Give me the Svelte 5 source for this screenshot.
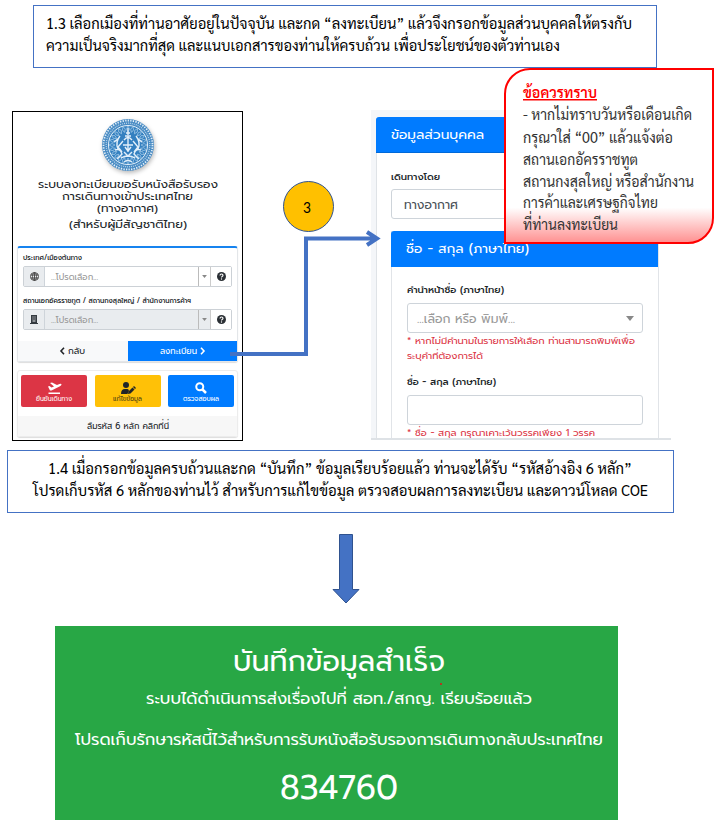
<script>
  const words = [];
  for (let i = 0; i < 24; i++) words.push(i * 15);
</script>

{#snippet line(s, w, h, size, base, cls = '', x = 0)}
  <svg class="line {cls}" width={w + x} height={h}>
    <text {x} y={base} font-size={size} textLength={w} lengthAdjust="spacingAndGlyphs">{s}</text>
  </svg>
{/snippet}

{#snippet help()}
  <svg width="9" height="9" viewBox="0 0 18 18"><circle cx="9" cy="9" r="9" fill="#2b3035" /><path d="M6 7q0-3 3-3t3 2.6q0 1.400-1.600 2.200T9 11" fill="none" stroke="#fff" stroke-width="2.200" /><circle cx="9" cy="14" r="1.300" fill="#fff" /></svg>
{/snippet}

{#snippet caret()}
  <svg width="5" height="3" viewBox="0 0 8 5"><path d="M0 0h8L4 5z" fill="#888" /></svg>
{/snippet}

<main>
  <section class="note first">
    {@render line('1.3 เลือกเมืองที่ท่านอาศัยอยู่ในปัจจุบัน และกด “ลงทะเบียน” แล้วจึงกรอกข้อมูลส่วนบุคคลให้ตรงกับ', 586, 22, 15, 17, 'doc')}
    {@render line('ความเป็นจริงมากที่สุด และแนบเอกสารของท่านให้ครบถ้วน เพื่อประโยชน์ของตัวท่านเอง', 514, 22, 15, 17, 'doc')}
  </section>

  <div class="screens">
    <section class="phone">
      <svg class="seal" width="54" height="54" viewBox="-27 -27 54 54">
        <circle r="26" fill="#4a8cc4" />
        <circle r="24.500" fill="none" stroke="#e4f0f9" stroke-width="1.800" stroke-dasharray="1.300 1.300" />
        <circle r="21.800" fill="none" stroke="#b9d5ea" stroke-width="1.200" stroke-dasharray="1 1" />
        <circle r="19.500" fill="#3480c0" stroke="#e6f2fa" stroke-width="1" />
        {#each words as a}
          <path transform="rotate({a})" d="M0-19l1.500 3L0-13l-1.500-3z" fill="none" stroke="#a6cce8" stroke-width=".7" />
        {/each}
        <g fill="none" stroke="#e2effa" stroke-width="1.400">
          <path d="M0-17v7M-3-9h6M-2-12h4M-4-5q4-5 8 0M0-9v16M-5 0h10M-8-9q-5 6-2 13M8-9q5 6 2 13M-5-4l-5 6 4 5M5-4l5 6-4 5M-13 5q5-2 7 4l-5 5M13 5q-5-2-7 4l5 5M-4 7l4 4 4-4M-7 13q7-4 14 0M-4 17q4-3 8 0M-14-3l5-4M14-3l-5-4M-3 2l3 4 3-4" />
        </g>
      </svg>
      <div class="title">
        {@render line('ระบบลงทะเบียนขอรับหนังสือรับรอง', 180, 12, 10, 10)}
        {@render line('การเดินทางเข้าประเทศไทย', 131, 12, 10, 10)}
        {@render line('(ทางอากาศ)', 61, 12, 10, 10)}
        {@render line('(สำหรับผู้มีสัญชาติไทย)', 118, 16, 10.500, 14)}
      </div>
      <div class="search">
        <div class="fields">
          {@render line('ประเทศ/เมืองต้นทาง', 59, 17, 7, 11, 'strong')}
          <div class="combo">
            <span class="lead"><svg width="9" height="9" viewBox="0 0 18 18" fill="none" stroke="#444" stroke-width="1.800"><circle cx="9" cy="9" r="8" /><ellipse cx="9" cy="9" rx="4" ry="8" /><path d="M1 6h16M1 12h16M9 1v16" /></svg></span>
            <span class="value">{@render line('...โปรดเลือก...', 47, 20, 8.5, 13, 'muted')}</span>
            <span class="drop">{@render caret()}</span><span class="ask">{@render help()}</span>
          </div>
          <div class="second">{@render line('สถานเอกอัครราชทูต / สถานกงสุลใหญ่ / สำนักงานการค้าฯ', 168, 22, 7, 16, 'strong')}</div>
          <div class="combo off">
            <span class="lead"><svg width="8" height="9" viewBox="0 0 16 18"><path fill="#343a40" d="M2 0h12v16h2v2H0v-2h2z" /><path stroke="#e9ecef" stroke-width="2" d="M5 4h2M9 4h2M5 8h2M9 8h2M5 12h6" /></svg></span>
            <span class="value">{@render line('...โปรดเลือก...', 47, 20, 8.5, 13, 'muted')}</span>
            <span class="drop">{@render caret()}</span><span class="ask">{@render help()}</span>
          </div>
        </div>
        <div class="actions">
          <button class="back"><svg width="5" height="8" viewBox="0 0 5 8"><path d="M4 .8L1 4l3 3.200" fill="none" stroke="currentColor" stroke-width="1.600" /></svg>{@render line('กลับ', 17, 20, 8, 13)}</button>
          <button class="go">{@render line('ลงทะเบียน', 37, 20, 8, 13)}<svg width="5" height="8" viewBox="0 0 5 8"><path d="M1 .8L4 4 1 7.200" fill="none" stroke="currentColor" stroke-width="1.600" /></svg></button>
        </div>
      </div>
      <div class="tools">
        <div class="tiles">
          <button class="tile red"><svg width="14" height="12" viewBox="0 0 28 24"><path fill="#fff" d="M3 21h23v3H3zM2 9l3-1 4 3 5-2-8-7 4-1 10 5 5-2q4-1 4 1 0 2-4 4L9 17H6z" /></svg>{@render line('ยืนยันเดินทาง', 36, 9, 6.500, 7)}</button>
          <button class="tile yellow"><svg width="14" height="12" viewBox="0 0 28 24"><circle cx="10" cy="6" r="6" fill="#212529" /><path fill="#212529" d="M0 24q0-10 8-10h5l3 2-3 8zM15 19l8-8 4 4-8 8-5 1zM24 10l2-2 4 4-2 2z" /></svg>{@render line('แก้ไขข้อมูล', 29, 9, 6.500, 7)}</button>
          <button class="tile blue"><svg width="12" height="12" viewBox="0 0 24 24" fill="none" stroke="#fff"><circle cx="9.500" cy="9.500" r="7" stroke-width="4" /><path d="M15 15l7 7" stroke-width="5" /></svg>{@render line('ตรวจสอบผล', 36, 9, 6.500, 7)}</button>
        </div>
        <div class="forgot">{@render line('ลืมรหัส 6 หลัก คลิกที่นี่', 82, 20, 9, 13)}</div>
      </div>
    </section>

    <section class="form">
      <div class="card">
        <header>{@render line('ข้อมูลส่วนบุคคล', 93, 35, 13, 22)}</header>
        <div class="body">
          {@render line('เดินทางโดย', 49, 36, 9, 27, 'strong')}
          <div class="input">{@render line('ทางอากาศ', 54, 28, 12, 19, 'val')}</div>
          <div class="inner">
            <header>{@render line('ชื่อ - สกุล (ภาษาไทย)', 123, 36, 13, 22)}</header>
            <div class="innerbody">
              {@render line('คำนำหน้าชื่อ (ภาษาไทย)', 97, 36, 9.500, 26, 'strong')}
              <div class="input select">{@render line('...เลือก หรือ พิมพ์...', 98, 28, 12, 19, 'muted')}<svg width="8" height="5" viewBox="0 0 8 5"><path d="M0 0h8L4 5z" fill="#888" /></svg></div>
              {@render line('* หากไม่มีคำนามในรายการให้เลือก ท่านสามารถพิมพ์เพื่อ', 228, 15, 9.500, 11, 'error')}
              {@render line('ระบุคำที่ต้องการได้', 76, 15, 9.500, 11, 'error')}
              {@render line('ชื่อ - สกุล (ภาษาไทย)', 89, 32, 9.500, 22, 'strong')}
              <div class="input"></div>
              {@render line('* ชื่อ - สกุล กรุณาเคาะเว้นวรรคเพียง 1 วรรค', 188, 14, 9.500, 11, 'error')}
            </div>
          </div>
        </div>
      </div>
    </section>
  </div>

  <svg class="connector" width="160" height="130" viewBox="0 0 160 130" fill="none" stroke="#4472c4" stroke-width="4">
    <path d="M0 119h76V3.500h70M137-3l10 6.500-10 6.500" />
  </svg>
  <div class="step">{@render line('3', 8, 20, 16, 16)}</div>

  <aside>
    {@render line('ข้อควรทราบ', 74, 21, 15, 17, 'heading')}
    {@render line('- หากไม่ทราบวันหรือเดือนเกิด', 169, 22, 15, 18)}
    {@render line('กรุณาใส่ “00” แล้วแจ้งต่อ', 150, 22, 15, 19)}
    {@render line('สถานเอกอัครราชทูต', 115, 22, 15, 19)}
    {@render line('สถานกงสุลใหญ่ หรือสำนักงาน', 171, 22, 15, 19)}
    {@render line('การค้าและเศรษฐกิจไทย', 135, 22, 15, 18)}
    {@render line('ที่ท่านลงทะเบียน', 95, 22, 15, 18)}
  </aside>

  <section class="note last">
    {@render line('1.4 เมื่อกรอกข้อมูลครบถ้วนและกด “บันทึก” ข้อมูลเรียบร้อยแล้ว ท่านจะได้รับ “รหัสอ้างอิง 6 หลัก”', 584, 22, 15, 16, 'doc', 15)}
    {@render line('โปรดเก็บรหัส 6 หลักของท่านไว้ สำหรับการแก้ไขข้อมูล ตรวจสอบผลการลงทะเบียน และดาวน์โหลด COE', 615, 22, 15, 16, 'doc')}
  </section>

  <svg class="down" width="28" height="70" viewBox="0 0 28 70"><path d="M7.500.5h13v55h6.500L14 69 1 55.500h6.500z" fill="#4472c4" stroke="#2f528f" /></svg>

  <section class="success">
    {@render line('บันทึกข้อมูลสำเร็จ', 212, 53, 29, 45)}
    {@render line('ระบบได้ดำเนินการส่งเรื่องไปที่ สอท./สกญ. เรียบร้อยแล้ว', 386, 34, 17, 25)}
    {@render line('โปรดเก็บรักษารหัสนี้ไว้สำหรับการรับหนังสือรับรองการเดินทางกลับประเทศไทย', 528, 42, 17, 32)}
    {@render line('834760', 118, 60, 34, 44)}
    <i></i>
  </section>
</main>

<style>
  :global(body) { background: #fff; }
  main { position: relative; width: 719px; height: 824px; padding-top: 5px; box-sizing: border-box; overflow: hidden; color: #212529; font-family: Prompt, Kanit, "Noto Sans Thai", "Noto Sans", sans-serif; }
  main * { box-sizing: border-box; }
  svg { display: block; flex: none; overflow: visible; }
  text { fill: currentColor; white-space: pre; }
  button { border: 0; padding: 0; font: inherit; }
  .note { border: 1px solid #4472c4; color: #000; }
  .doc, aside { font-family: "TH SarabunPSK", "TH Sarabun New", Sarabun, "Noto Sans Thai Looped", Laksaman, Garuda, Loma, Waree, "Noto Sans Thai", Lato, sans-serif; }
  .first { width: 624px; height: 63px; margin-left: 33px; padding: 6px 12px; }
  .screens { display: flex; justify-content: space-between; margin: 42px 48px 0 12px; height: 330px; }
  .phone { width: 231px; height: 330px; border: 1.500px solid #000; margin-top: 1px; padding: 6px 4px 0; }
  .seal { margin: 0 auto; filter: drop-shadow(1px 2px 2px #bbb); }
  .title { display: flex; flex-direction: column; align-items: center; padding-top: 6px; height: 74px; }
  .search { border: 1px solid #e3e6e9; border-top: 2px solid #1683ef; border-radius: 3px; height: 116px; display: flex; flex-direction: column; justify-content: space-between; box-shadow: 0 1px 1px #ddd; }
  .fields { padding: 1px 5px; }
  .combo { display: flex; height: 21px; border: 1px solid #ccd1d6; border-radius: 2px; }
  .combo span { display: flex; align-items: center; justify-content: center; }
  .lead { width: 21px; background: #e9ecef; border-right: 1px solid #ced4da; }
  .combo .value { flex: 1; justify-content: flex-start; padding-left: 6px; }
  .drop { width: 12px; border-left: 1px solid #bbb; }
  .ask { width: 21px; background: #fff; border-left: 1px solid #ccc; }
  .off .value, .off .drop { background: #e9ecef; }
  .muted { color: #999; }
  .strong { font-weight: 500; }
  .actions { display: flex; height: 20px; }
  .actions button { flex: 1; display: flex; align-items: center; justify-content: center; gap: 3px; }
  .back { background: #f8f9fa; color: #212529; }
  .go { background: #007bff; color: #fff; }
  .tools { height: 67px; margin-top: 8px; border: 1px solid #ececec; border-radius: 3px; display: flex; flex-direction: column; justify-content: space-between; box-shadow: 0 1px 1px #ddd; }
  .tiles { display: flex; justify-content: space-between; padding: 4px 3px 0; }
  .tile { width: 66px; height: 32px; border-radius: 2px; display: flex; flex-direction: column; align-items: center; justify-content: center; color: #fff; padding-top: 3px; }
  .red { background: #dc3545; }
  .yellow { background: #ffc107; color: #4a3d12; }
  .blue { background: #007bff; }
  .forgot { background: #f7f7f7; height: 20px; display: flex; justify-content: center; }
  .form { width: 300px; background: linear-gradient(#f4f6f9, #f4f6f9) left / 5px 100% no-repeat, linear-gradient(#f4f6f9, #f4f6f9) top / 100% 7px no-repeat; border-bottom: 2px solid #dee2e6; padding: 7px 0 0 5px; overflow: hidden; }
  .card { background: #fff; height: 330px; border-left: 1px solid #dfe3e7; border-radius: 3px; }
  header { background: #007bff; color: #fff; border-radius: 3px 3px 0 0; padding-left: 15px; }
  .card > header { margin-left: -1px; border-bottom: 1px solid #0069d9; }
  .body { padding: 0 12px 0 14px; }
  .input { height: 30px; border: 1px solid #ced4da; border-radius: 3px; padding: 0 12px; background: #fff; }
  .val { color: #495057; }
  .select { display: flex; align-items: center; justify-content: space-between; padding: 0 8px 0 9px; }
  .inner { margin-top: 12px; border: 1px solid #e1e4e8; border-top: 0; height: 230px; }
  .inner > header { margin: 0 0 0 -1px; }
  .innerbody { padding: 0 15px; }
  .error { color: #dc3545; }
  .connector { position: absolute; left: 230px; top: 235px; }
  .step { position: absolute; left: 283px; top: 181px; width: 51px; height: 51px; border: 1px solid #2f528f; border-radius: 50%; background: #ffc000; display: flex; align-items: center; justify-content: center; padding: 1px 3px 0 0; color: #000; font-family: Lato, sans-serif; }
  aside { position: absolute; left: 504px; top: 68px; width: 210px; height: 176px; padding: 11px 17px; border: 2px solid #f00; border-radius: 26px 0 26px 0; background: linear-gradient(#fff 80%, #ff9292); color: #333; }
  .heading { color: #f00; font-weight: 600; }
  .heading text { text-decoration: underline; }
  .last { width: 667px; height: 63px; margin: 10px 0 0 7px; padding: 7px 25px; }
  .down { margin: 21px 0 0 332px; }
  .success { position: relative; margin: 22px 0 0 55px; padding-left: 5px; width: 563px; height: 194px; background: #28a745; color: #fff; display: flex; flex-direction: column; align-items: center; }
  .success i { position: absolute; left: 385px; top: 57px; width: 2px; height: 2px; background: #b03a20; }
</style>
